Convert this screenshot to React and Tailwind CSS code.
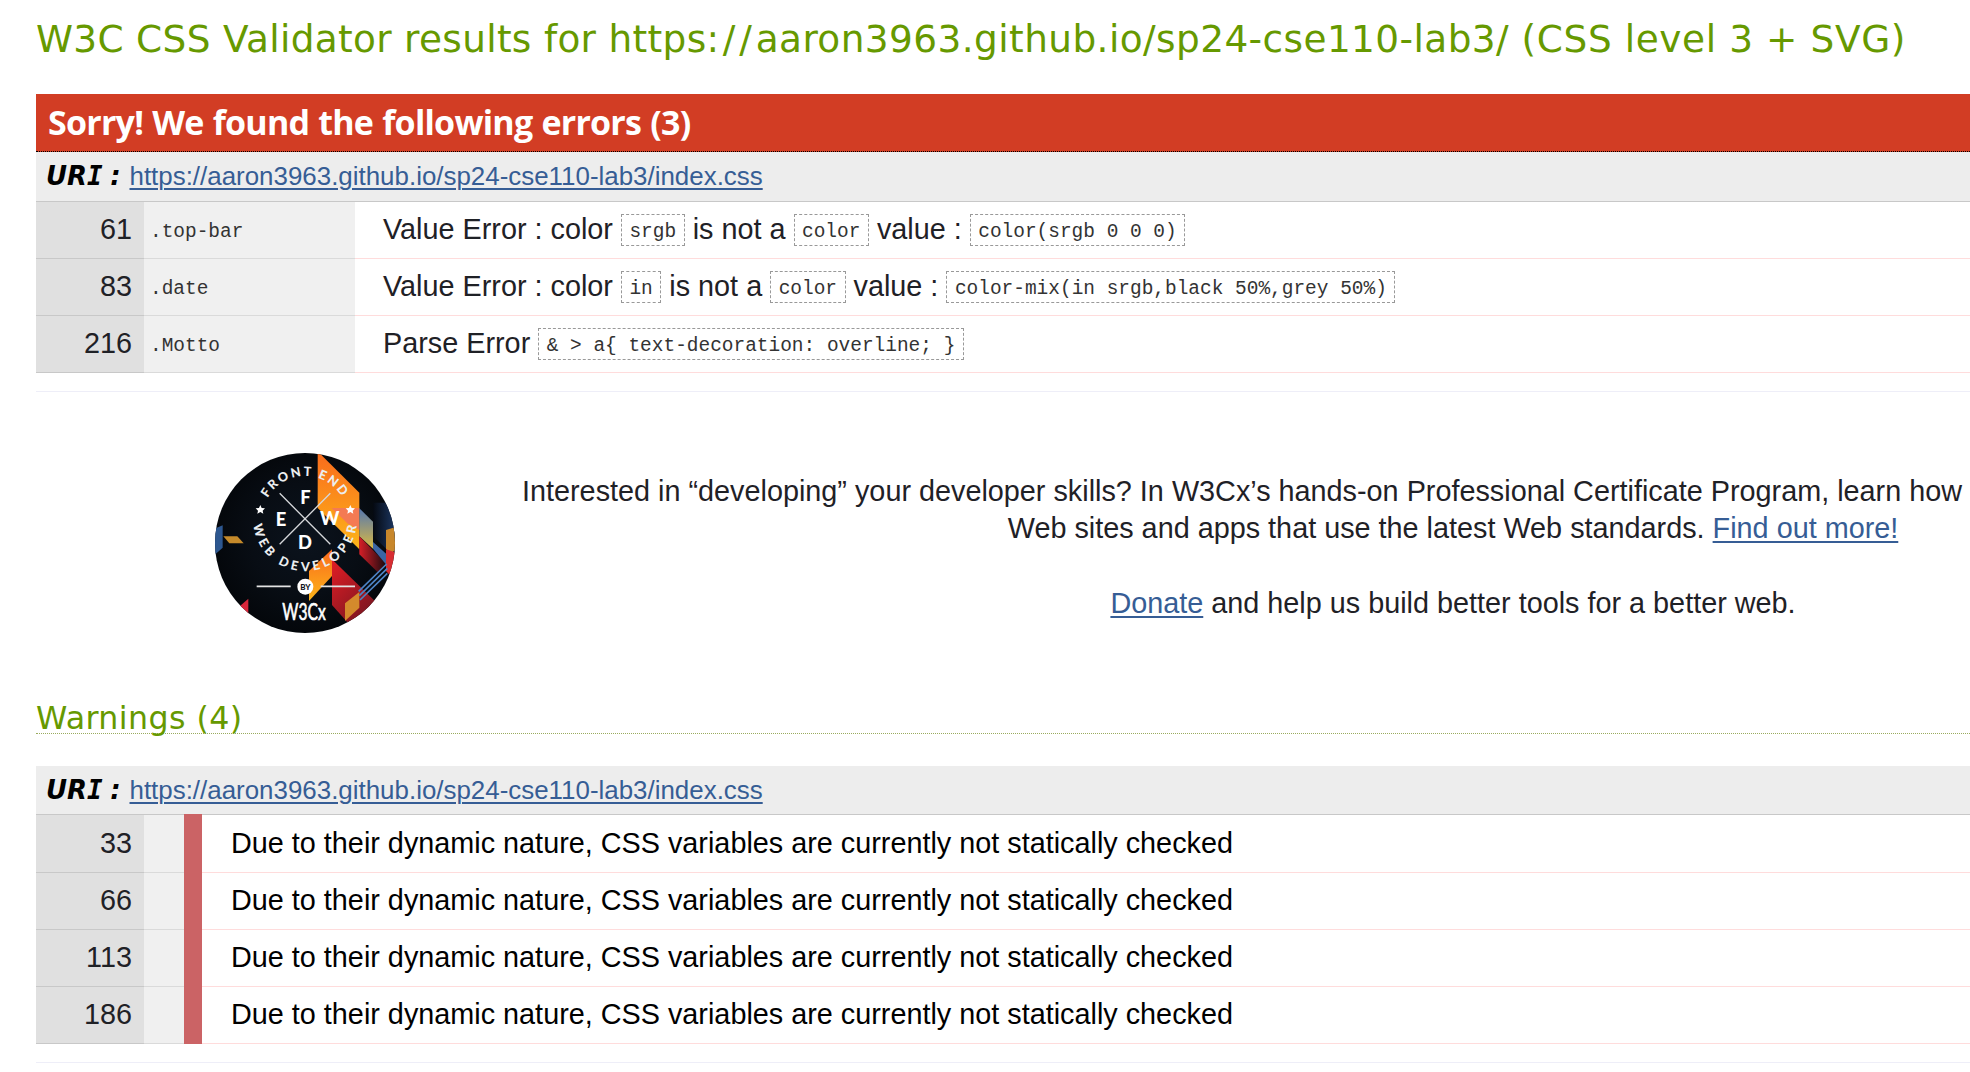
const CSS_URL = "https://aaron3963.github.io/sp24-cse110-lab3/index.css";

function Link({ children }) {
  return (
    <a href="#" className="text-[#365d95] underline decoration-2 underline-offset-[3px]">
      {children}
    </a>
  );
}

function Code({ children }) {
  return (
    <code className="inline-flex h-8 items-center border border-dashed border-[#999] px-[7.5px] pt-[5px] align-top font-['Liberation_Mono',monospace] text-[19.47px] leading-none whitespace-pre text-[#333]">
      {children}
    </code>
  );
}

function UriHeader({ className }) {
  return (
    <div className={`flex items-center border-b border-[#c8c8c8] bg-[#ededed] pl-[10px] whitespace-nowrap ${className}`}>
      <span className="w-[83.5px] font-['DejaVu_Sans',Verdana,sans-serif] text-[25.92px] leading-none font-bold text-black italic [word-spacing:-1.5px]">
        UR<span className="font-['DejaVu_Sans_Mono',monospace]">I</span> :
      </span>
      <span className="text-[25.92px] leading-none">
        <Link>{CSS_URL}</Link>
      </span>
    </div>
  );
}

const errors = [
  { line: 61, selector: ".top-bar", parts: ["Value Error : color", ["srgb"], "is not a", ["color"], "value :", ["color(srgb 0 0 0)"]] },
  { line: 83, selector: ".date", parts: ["Value Error : color", ["in"], "is not a", ["color"], "value :", ["color-mix(in srgb,black 50%,grey 50%)"]] },
  { line: 216, selector: ".Motto", parts: ["Parse Error", ["& > a{ text-decoration: overline; }"]] },
];

const warnings = [33, 66, 113, 186];

function ErrorRow({ line, selector, parts }) {
  return (
    <div className="group flex h-[57px]">
      <div className="flex w-[108px] items-center justify-end border-b border-[#c8c8c8] bg-[#e0e0e0] pr-3 pb-px leading-none">{line}</div>
      <div className="flex w-[211px] items-center border-b border-[#dadada] bg-[#f0f0f0] pt-[5px] pl-[6px] font-['Liberation_Mono',monospace] text-[19.47px] leading-none text-[#333]">
        {selector}
      </div>
      <div className="flex flex-1 items-start gap-2 border-b border-[#ffdcdc] pt-[12px] pl-7 leading-8 whitespace-nowrap">
        {parts.map((p, i) =>
          Array.isArray(p) ? (
            <Code key={i}>{p[0]}</Code>
          ) : (
            <span key={i} className="-mt-px group-first-of-type:-mt-[2px]">{p}</span>
          )
        )}
      </div>
    </div>
  );
}

function WarningRow({ line }) {
  return (
    <div className="flex h-[57px] pb-0 leading-none first:h-[58px]">
      <div className="flex w-[108px] items-center justify-end border-b border-[#c8c8c8] bg-[#e0e0e0] pr-3 pb-px">{line}</div>
      <div className="w-10 border-b border-[#dadada] bg-[#f0f0f0]" />
      <div className="-mt-px w-[18px] bg-[#cb6365]" />
      <div className="flex flex-1 items-center border-b border-[#ffdcdc] pb-px pl-[29px] whitespace-nowrap text-black">
        Due to their dynamic nature, CSS variables are currently not statically checked
      </div>
    </div>
  );
}

function Badge() {
  return (
    <svg viewBox="45 41 540 540" className="h-[180px] w-[180px]" fontFamily="Lato, sans-serif" fill="#fff">
      <defs>
        <clipPath id="disc"><circle cx="315" cy="311" r="270" /></clipPath>
        <radialGradient id="night" gradientUnits="userSpaceOnUse" cx="320" cy="300" r="280">
          <stop offset="0" stopColor="#0b131d" />
          <stop offset=".6" stopColor="#080d14" />
          <stop offset="1" stopColor="#04070b" />
        </radialGradient>
        <linearGradient id="flame" x1="0" y1="0" x2="0" y2="1">
          <stop offset="0" stopColor="#f96a1c" />
          <stop offset="1" stopColor="#fdb51a" />
        </linearGradient>
        <linearGradient id="crimson" x1="0" y1="0" x2=".7" y2="1">
          <stop offset="0" stopColor="#e31d25" />
          <stop offset="1" stopColor="#6b1520" />
        </linearGradient>
        <linearGradient id="skyGold" x1="0" y1="0" x2="0" y2="1">
          <stop offset="0" stopColor="#5577b0" />
          <stop offset="1" stopColor="#d9b943" />
        </linearGradient>
        <linearGradient id="navy" x1="0" y1="0" x2="1" y2="0">
          <stop offset="0" stopColor="#050911" />
          <stop offset="1" stopColor="#1d3a68" />
        </linearGradient>
        <linearGradient id="ember" x1="0" y1="0" x2="1" y2="0">
          <stop offset="0" stopColor="#d51f27" />
          <stop offset="1" stopColor="#14090e" />
        </linearGradient>
        <path id="topArc" d="M203 176 A128 128 0 0 1 427 176" />
        <path id="bottomArc" d="M160 257 A156 156 0 0 0 470 257" />
      </defs>
      <g clipPath="url(#disc)">
        <rect x="40" y="36" width="550" height="550" fill="url(#night)" />
        <path d="M353 36 L478 160 V330 L353 206Z" fill="url(#flame)" />
        <path d="M395 206 H478 V272 L442 252Z" fill="#f47a53" />
        <path d="M478 207 L519 247 V328 L478 291Z" fill="url(#skyGold)" />
        <path d="M519 190 H590 V300 L560 330 L519 290Z" fill="url(#navy)" />
        <path d="M478 291 L560 375 L535 400 L478 345Z" fill="url(#ember)" />
        <path d="M519 308 L560 345 V378 L519 328Z" fill="#3b65a4" />
        <path d="M558 272 L590 262 V330 L575 340 L558 330Z" fill="#c8872b" />
        <path d="M558 330 L590 340 V430 L558 395Z" fill="#d72d32" />
        <path d="M396 360 L540 500 L470 580 L396 497Z" fill="url(#crimson)" />
        <path d="M327 395 L396 330 V410 L327 485Z" fill="url(#flame)" />
        <path d="M435 492 L478 458 V505 L435 545Z" fill="#d48a2c" />
        <path d="M476 456 L560 374 M478 469 L562 387 M480 482 L562 402" stroke="#4d83c4" strokeWidth="5" fill="none" />
        <path d="M40 270 L68 258 V325 L40 350Z" fill="#2d5790" />
        <path d="M70 291 H112 L131 312 H88Z" fill="#c58a2b" />
        <path d="M120 500 L145 478 V530Z" fill="#d7263a" />
      </g>
      <path d="M239 162 L391 315 M391 162 L239 315" stroke="#d5d7da" strokeWidth="4" />
      <g fontWeight="900" fontSize="55" textAnchor="middle">
        <text x="316" y="193">F</text>
        <text x="243" y="259">E</text>
        <text x="389" y="257">W</text>
        <text x="315" y="328">D</text>
      </g>
      <g fontWeight="900" fontSize="38" fill="#eceef0">
        <text textLength="268" lengthAdjust="spacing"><textPath href="#topArc" textLength="268">FRONT END</textPath></text>
        <text textLength="452" lengthAdjust="spacing"><textPath href="#bottomArc" textLength="452">WEB DEVELOPER</textPath></text>
      </g>
      <path d="M181 197 l4 9 10 1 -7 7 2 9 -9 -5 -9 5 2 -9 -7 -7 10 -1Z" />
      <path d="M451 197 l4 9 10 1 -7 7 2 9 -9 -5 -9 5 2 -9 -7 -7 10 -1Z" />
      <path d="M170 441 H272 M362 441 H465" stroke="#e3e3e3" strokeWidth="5" />
      <circle cx="316" cy="442" r="24" />
      <text x="316" y="451" fontSize="24" fontWeight="900" fill="#11161d" textAnchor="middle">BY</text>
      <text x="247" y="543" fontSize="70" fontWeight="400" stroke="#fff" strokeWidth="2" textLength="130" lengthAdjust="spacingAndGlyphs">W3Cx</text>
    </svg>
  );
}

export default function App() {
  return (
    <main className="flex h-[1072px] w-[1970px] flex-col overflow-hidden bg-white pl-9 font-['Liberation_Sans',Arial,sans-serif] text-[28.8px] text-[#1f2126]">
      <h1 className="h-[94px] pt-[15px] font-['DejaVu_Sans',Verdana,sans-serif] text-[37.44px] leading-[48px] tracking-[0.6px] whitespace-nowrap text-[#690]">
        <span className="tracking-[0.32px]">W3C CSS Validator results for https</span>
        <span className="tracking-[3.8px]">://</span>
        <span className="tracking-[0.42px]">aaron3963.github.io/sp24-cse110-lab3/</span> (CSS level 3 + SVG)
      </h1>

      <section>
        <h2 className="flex h-[58px] items-center border-b border-dotted border-black bg-[#d23d24] pb-px pl-[12px] font-['Open_Sans',sans-serif] text-[34px] leading-none font-bold tracking-[-0.77px] text-white [word-spacing:1px]">
          Sorry! We found the following errors (3)
        </h2>
        <UriHeader className="h-[50px]" />
        {errors.map((e) => <ErrorRow key={e.line} {...e} />)}
      </section>

      <section className="mt-[18px] flex h-[293px] border-t border-[#eeeef8]">
        <div className="w-[486px] shrink-0 pt-[61px] pl-[179px]">
          <Badge />
        </div>
        <div className="w-[1862px] shrink-0 pt-[80.6px] leading-[37.5px]">
          <p className="whitespace-nowrap">
            Interested in “developing” your developer skills? In W3Cx’s hands-on Professional Certificate Program, learn how
          </p>
          <p className="text-center">
            Web sites and apps that use the latest Web standards. <Link>Find out more!</Link>
          </p>
          <p className="mt-[37.5px] text-center">
            <Link>Donate</Link> and help us build better tools for a better web.
          </p>
        </div>
      </section>

      <section>
        <h3 className="mt-[12px] h-[38px] border-b border-dotted border-[#9aab5e] font-['DejaVu_Sans',Verdana,sans-serif] text-[31.68px] leading-[44px] tracking-[0.4px] text-[#690]">
          Warnings (4)
        </h3>
        <UriHeader className="mt-8 h-[49px] pt-px" />
        <div>
          {warnings.map((n) => <WarningRow key={n} line={n} />)}
        </div>
      </section>
      <hr className="mt-[18px] border-[#eeeef8]" />
    </main>
  );
}
